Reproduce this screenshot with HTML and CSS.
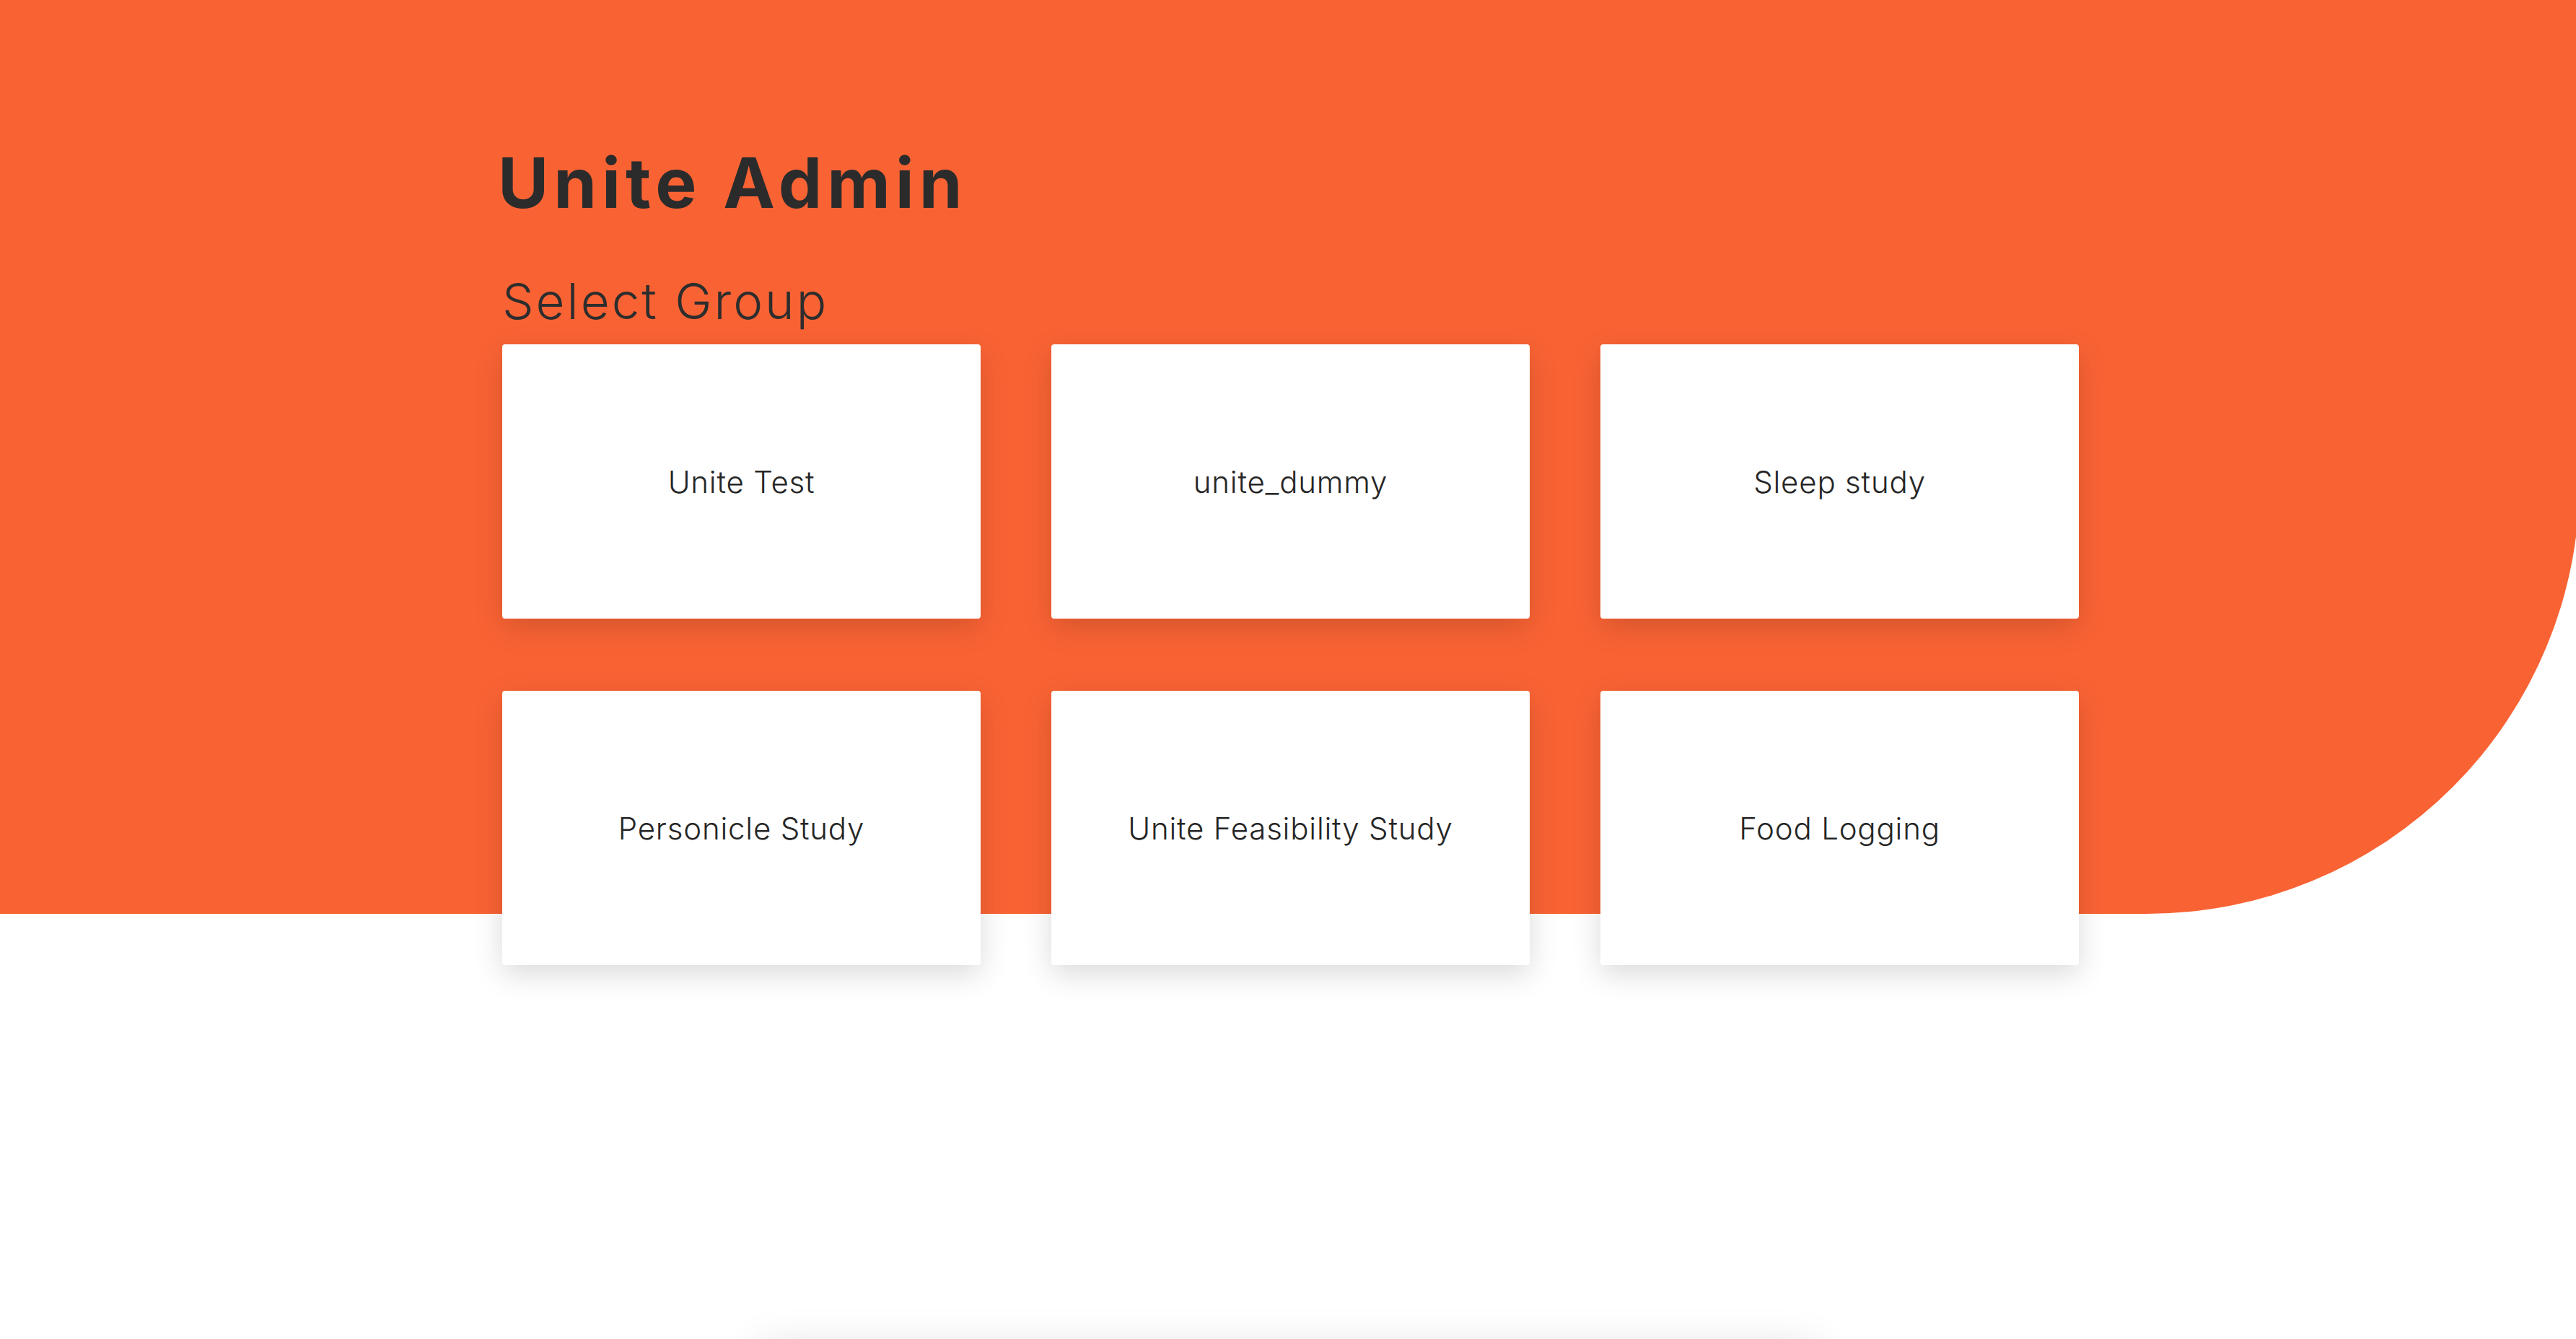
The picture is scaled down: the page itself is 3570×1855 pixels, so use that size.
FILE: index.html
```html
<!DOCTYPE html>
<html lang="en">
<head>
<meta charset="utf-8">
<title>Unite Admin</title>
<link rel="stylesheet" href="styles.css">
</head>
<body>
<div class="page">
  <section class="hero">
    <div class="container">
      <h1 class="title">Unite Admin</h1>
      <h2 class="subtitle">Select Group</h2>
      <div class="grid">
        <a class="card">Unite Test</a>
        <a class="card">unite_dummy</a>
        <a class="card">Sleep study</a>
        <a class="card">Personicle Study</a>
        <a class="card">Unite Feasibility Study</a>
        <a class="card">Food Logging</a>
      </div>
    </div>
  </section>
  <section class="panel"></section>
</div>
</body>
</html>
```

FILE: styles.css
```css
html, body {
  margin: 0;
  padding: 0;
  overflow-x: hidden;
  background: #ffffff;
}

body {
  font-family: "Inter", "Liberation Sans", sans-serif;
  color: #2d2d2d;
}

.page {
  display: flex;
  flex-direction: column;
}

.hero {
  background: #f96334;
  height: 1266px;
  width: calc(100% + 5px);
  border-bottom-right-radius: 600px;
  box-sizing: border-box;
  padding-top: 205px;
}

.container {
  margin-left: 696px;
  width: 2185px;
  display: flex;
  flex-direction: column;
}

.title {
  margin: 0 0 0 -6px;
  font-size: 96px;
  line-height: 96px;
  font-weight: 700;
  letter-spacing: 7px;
  color: #2b2b2b;
}

.subtitle {
  margin: 82px 0 0 0;
  font-size: 69px;
  line-height: 69px;
  font-weight: 300;
  letter-spacing: 3px;
  color: #2d2d2d;
}

.grid {
  margin-top: 25px;
  display: grid;
  grid-template-columns: repeat(3, 663px);
  grid-auto-rows: 380px;
  column-gap: 98px;
  row-gap: 100px;
}

.card {
  background: #ffffff;
  border-radius: 4px;
  box-shadow: 0 12px 40px rgba(0, 0, 0, 0.15);
  display: flex;
  align-items: center;
  justify-content: center;
  font-size: 42px;
  font-weight: 300;
  letter-spacing: 0.8px;
  color: #262626;
  cursor: pointer;
}

.panel {
  align-self: center;
  width: 1470px;
  height: 600px;
  margin-top: 604px;
  background: #ffffff;
  border-radius: 8px;
  box-shadow: 0 0 60px rgba(0, 0, 0, 0.15);
}
```
